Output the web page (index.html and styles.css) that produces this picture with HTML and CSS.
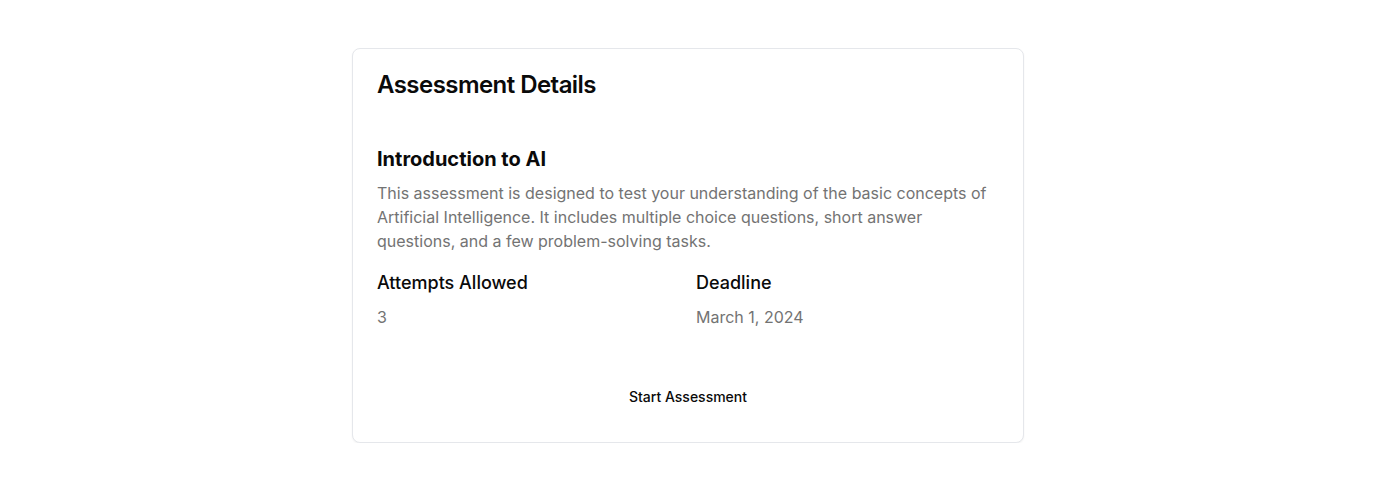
FILE: index.html
```html
<!DOCTYPE html>
<html lang="en">
<head>
<meta charset="utf-8">
<title>Assessment Details</title>
<link rel="stylesheet" href="styles.css">
</head>
<body>
<main class="page">
  <section class="card">
    <header class="card-header">
      <h1 class="card-title">Assessment Details</h1>
    </header>
    <div class="card-content">
      <h2 class="course-title">Introduction to AI</h2>
      <p class="description">This assessment is designed to test your understanding of the basic concepts of Artificial Intelligence. It includes multiple choice questions, short answer questions, and a few problem-solving tasks.</p>
      <div class="meta-grid">
        <div class="meta-item">
          <h3 class="meta-label">Attempts Allowed</h3>
          <p class="meta-value">3</p>
        </div>
        <div class="meta-item">
          <h3 class="meta-label">Deadline</h3>
          <p class="meta-value">March 1, 2024</p>
        </div>
      </div>
    </div>
    <footer class="card-footer">
      <button class="start-btn" type="button">Start Assessment</button>
    </footer>
  </section>
</main>
</body>
</html>
```

FILE: styles.css
```css
* { box-sizing: border-box; }
html, body {
  margin: 0;
  padding: 0;
  background: #ffffff;
  font-family: Inter, "Noto Sans", sans-serif;
  color: #0a0a0a;
}
.page {
  padding-top: 48px;
  display: flex;
  justify-content: center;
}
.card {
  width: 672px;
  border: 1px solid #e5e7eb;
  border-radius: 8px;
  background: #ffffff;
  box-shadow: 0 1px 2px rgba(0, 0, 0, 0.05);
}
.card-header {
  padding: 24px 24px 48px;
}
.card-title {
  margin: 0;
  font-size: 24px;
  line-height: 24px;
  font-weight: 600;
  letter-spacing: -0.55px;
}
.card-content {
  padding: 0 24px;
}
.course-title {
  margin: 0;
  font-size: 20px;
  line-height: 28px;
  font-weight: 700;
}
.description {
  margin: 8px 0 0;
  font-size: 16px;
  line-height: 24px;
  color: #737373;
}
.meta-grid {
  margin-top: 16px;
  display: grid;
  grid-template-columns: 1fr 1fr;
  column-gap: 16px;
}
.meta-label {
  margin: 0;
  font-size: 18px;
  line-height: 28px;
  font-weight: 500;
}
.meta-value {
  margin: 8px 0 0;
  font-size: 16px;
  line-height: 24px;
  color: #737373;
}
.card-footer {
  padding: 47px 24px 26px;
  display: flex;
  justify-content: center;
}
.start-btn {
  height: 40px;
  padding: 0 16px;
  border: none;
  border-radius: 6px;
  background: transparent;
  font-family: Inter, "Noto Sans", sans-serif;
  font-size: 14px;
  font-weight: 500;
  color: #0a0a0a;
  cursor: pointer;
}
```
